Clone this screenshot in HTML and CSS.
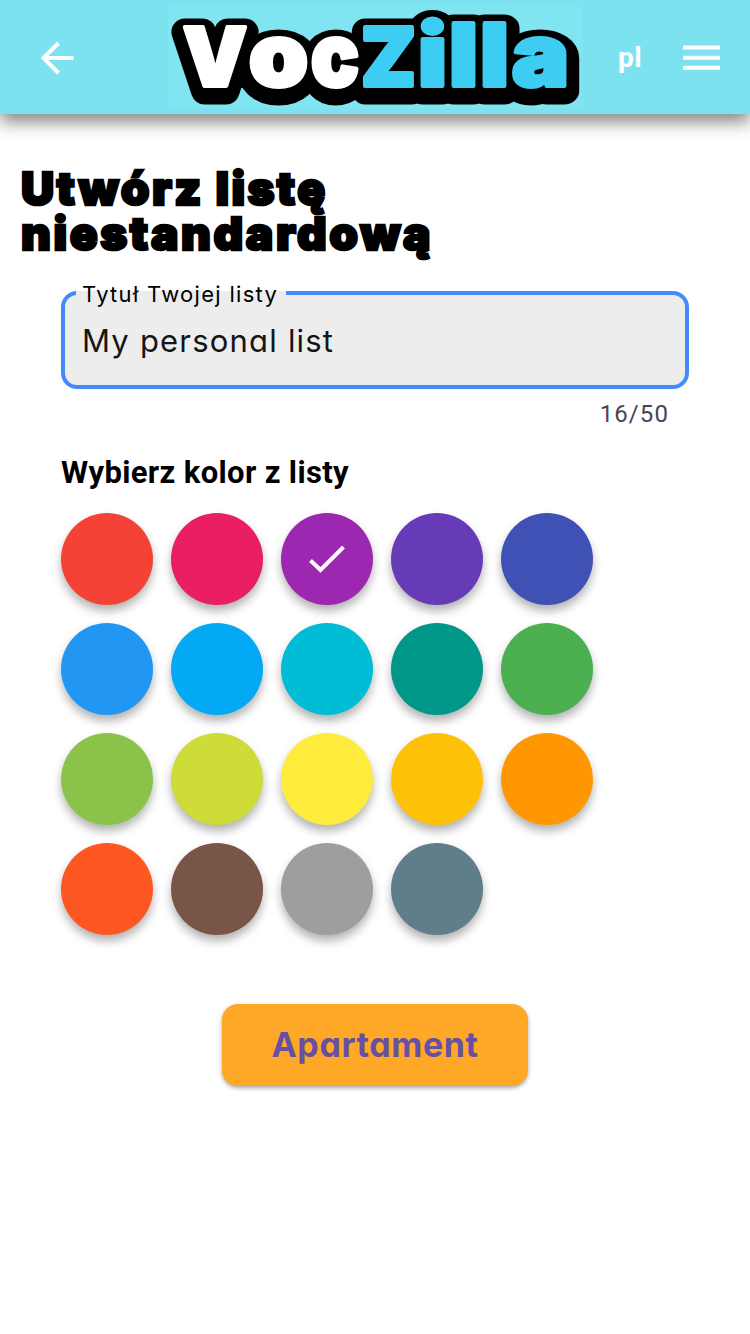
FILE: index.html
```html
<!DOCTYPE html>
<html lang="pl">
<head>
<meta charset="utf-8">
<title>VocZilla</title>
<link rel="stylesheet" href="styles.css">
</head>
<body>
<header class="bar">
  <svg class="back" width="34" height="34" viewBox="0 0 34 34"><path d="M33.500 17H4M18.500 2L3.500 17l15 15" /></svg>
  <svg class="logo" width="414" height="102" viewBox="168 6 414 102" role="img" aria-label="VocZilla">
    <defs>
      <g id="word">
        <text class="cap" x="183" y="86" textLength="64" lengthAdjust="spacingAndGlyphs">V</text>
        <text class="low" x="249" y="86" textLength="59" lengthAdjust="spacingAndGlyphs">o</text>
        <text class="low" x="311" y="86" textLength="48" lengthAdjust="spacingAndGlyphs">c</text>
      </g>
      <g id="tail">
        <text class="cap" x="361" y="86" textLength="55" lengthAdjust="spacingAndGlyphs">Z</text>
        <text class="low" x="418" y="86" textLength="29" lengthAdjust="spacingAndGlyphs">i</text>
        <text class="low" x="449" y="86" textLength="29" lengthAdjust="spacingAndGlyphs">l</text>
        <text class="low" x="480" y="86" textLength="29" lengthAdjust="spacingAndGlyphs">l</text>
        <text class="low" x="512" y="86" textLength="57" lengthAdjust="spacingAndGlyphs">a</text>
      </g>
    </defs>
    <rect x="168" y="6" width="414" height="102" fill="#80e5f1"/>
    <g class="outline"><rect x="215" y="50" width="340" height="38"/><use href="#word" y="5"/><use href="#tail" y="5"/></g>
    <g class="white"><use href="#word"/></g>
    <g class="blue"><use href="#tail"/></g>
  </svg>
  <span class="lang">pl</span>
  <svg class="menu" width="37" height="26" viewBox="0 0 37 26"><path d="M0 2.500h37M0 12.700h37M0 22.800h37"/></svg>
</header>
<main>
  <h1 class="title"><span class="line1">Utwórz listę</span><br><span class="line2">niestandardową</span></h1>
  <section class="form">
    <div class="field">
      <span class="label">Tytuł Twojej listy</span>
      <span class="value">My personal list</span>
    </div>
    <div class="counter">16/50</div>
    <h2 class="subtitle">Wybierz kolor z listy</h2>
    <div class="colors">
      <i class="dot red"></i><i class="dot pink"></i><i class="dot purple"><svg width="36" height="28" viewBox="0 0 36 28"><path d="M1.500 15.500L11.500 25 34.500 2"/></svg></i><i class="dot deep-purple"></i><i class="dot indigo"></i>
      <i class="dot sky"></i><i class="dot light-blue"></i><i class="dot cyan"></i><i class="dot teal"></i><i class="dot green"></i>
      <i class="dot light-green"></i><i class="dot lime"></i><i class="dot yellow"></i><i class="dot amber"></i><i class="dot orange"></i>
      <i class="dot deep-orange"></i><i class="dot brown"></i><i class="dot grey"></i><i class="dot blue-grey"></i>
    </div>
  </section>
  <button class="submit">Apartament</button>
</main>
</body>
</html>
```

FILE: styles.css
```css
* { box-sizing: border-box; }
body { margin: 0; height: 1334px; background: #fff; font-family: Inter, sans-serif; overflow: hidden; }
.bar { display: flex; align-items: center; height: 114px; padding: 0 30px 0 40px; background: #7de2f0; box-shadow: 0 8px 16px rgba(0,0,0,.48); }
svg { display: block; flex: none; }
.back path, .menu path, .dot path { fill: none; stroke: #fff; stroke-width: 4; }
.back { margin: 1px 94px 0 0; }
.logo { overflow: visible; }
.logo text { font-family: Inter, sans-serif; font-weight: 900; }
.cap { font-size: 81px; }
.low { font-size: 86px; }
.outline { fill: #000; stroke: #000; stroke-width: 27px; stroke-linejoin: round; }
.outline rect { stroke: none; }
.white { fill: #fff; stroke: #fff; stroke-width: 4px; stroke-linejoin: round; }
.blue { fill: #3dcdf2; stroke: #3dcdf2; stroke-width: 4px; stroke-linejoin: round; }
.lang { width: 65px; margin: 2px 0 0 36px; font: 700 28px/32px Roboto, sans-serif; letter-spacing: .5px; color: #fff; }
.menu { margin-top: 1px; }
.title { margin: 0; padding: 52px 0 0 21px; font-size: 46px; font-weight: 900; line-height: 45px; -webkit-text-stroke: 2.500px #000; }
.line1 { letter-spacing: 2.4px; }
.line2 { letter-spacing: 2.6px; }
.form { padding: 35px 61px 0; }
.field { position: relative; height: 98px; padding: 28px 17px 0; border: 4px solid #448aff; border-radius: 16px; background: #ededed; }
.label { position: absolute; left: 11px; top: -16px; width: 210px; height: 30px; padding-left: 6px; font-size: 22px; line-height: 30px; letter-spacing: 1.3px; color: #000; white-space: nowrap; font-feature-settings: "cv11"; background: linear-gradient(#ededed,#ededed) 0 12px / 210px 4px no-repeat; }
.value { display: block; font-size: 31px; line-height: 36px; letter-spacing: 1.2px; color: #151515; font-weight: 400; font-feature-settings: "cv11"; }
.counter { padding: 10px 20px 0 0; text-align: right; font: 400 24px/30px Roboto, sans-serif; letter-spacing: 1.1px; color: #49454f; }
.subtitle { margin: 26px 0 0; font: 700 31px/36px Roboto, sans-serif; letter-spacing: .35px; color: #000; }
.colors { display: grid; grid-template-columns: repeat(5, 92px); gap: 18px; margin-top: 22px; }
.dot { display: flex; align-items: center; justify-content: center; height: 92px; border-radius: 50%; box-shadow: 0 6px 10px rgba(0,0,0,.3); }
.red { background: #f44336; }
.pink { background: #e91e63; }
.purple { background: #9c27b0; }
.deep-purple { background: #673ab7; }
.indigo { background: #3f51b5; }
.sky { background: #2196f3; }
.light-blue { background: #03a9f4; }
.cyan { background: #00bcd4; }
.teal { background: #009688; }
.green { background: #4caf50; }
.light-green { background: #8bc34a; }
.lime { background: #cddc39; }
.yellow { background: #ffeb3b; }
.amber { background: #ffc107; }
.orange { background: #ff9800; }
.deep-orange { background: #ff5722; }
.brown { background: #795548; }
.grey { background: #9e9e9e; }
.blue-grey { background: #607d8b; }
.submit { display: block; width: 306px; height: 82px; margin: 69px auto 0; padding: 0; border: 0; border-radius: 16px; background: #ffa726; box-shadow: 0 2px 4px rgba(0,0,0,.35); color: #6750a4; font: 700 34px/82px Inter, sans-serif; letter-spacing: .6px; font-feature-settings: "cv11"; }
```
